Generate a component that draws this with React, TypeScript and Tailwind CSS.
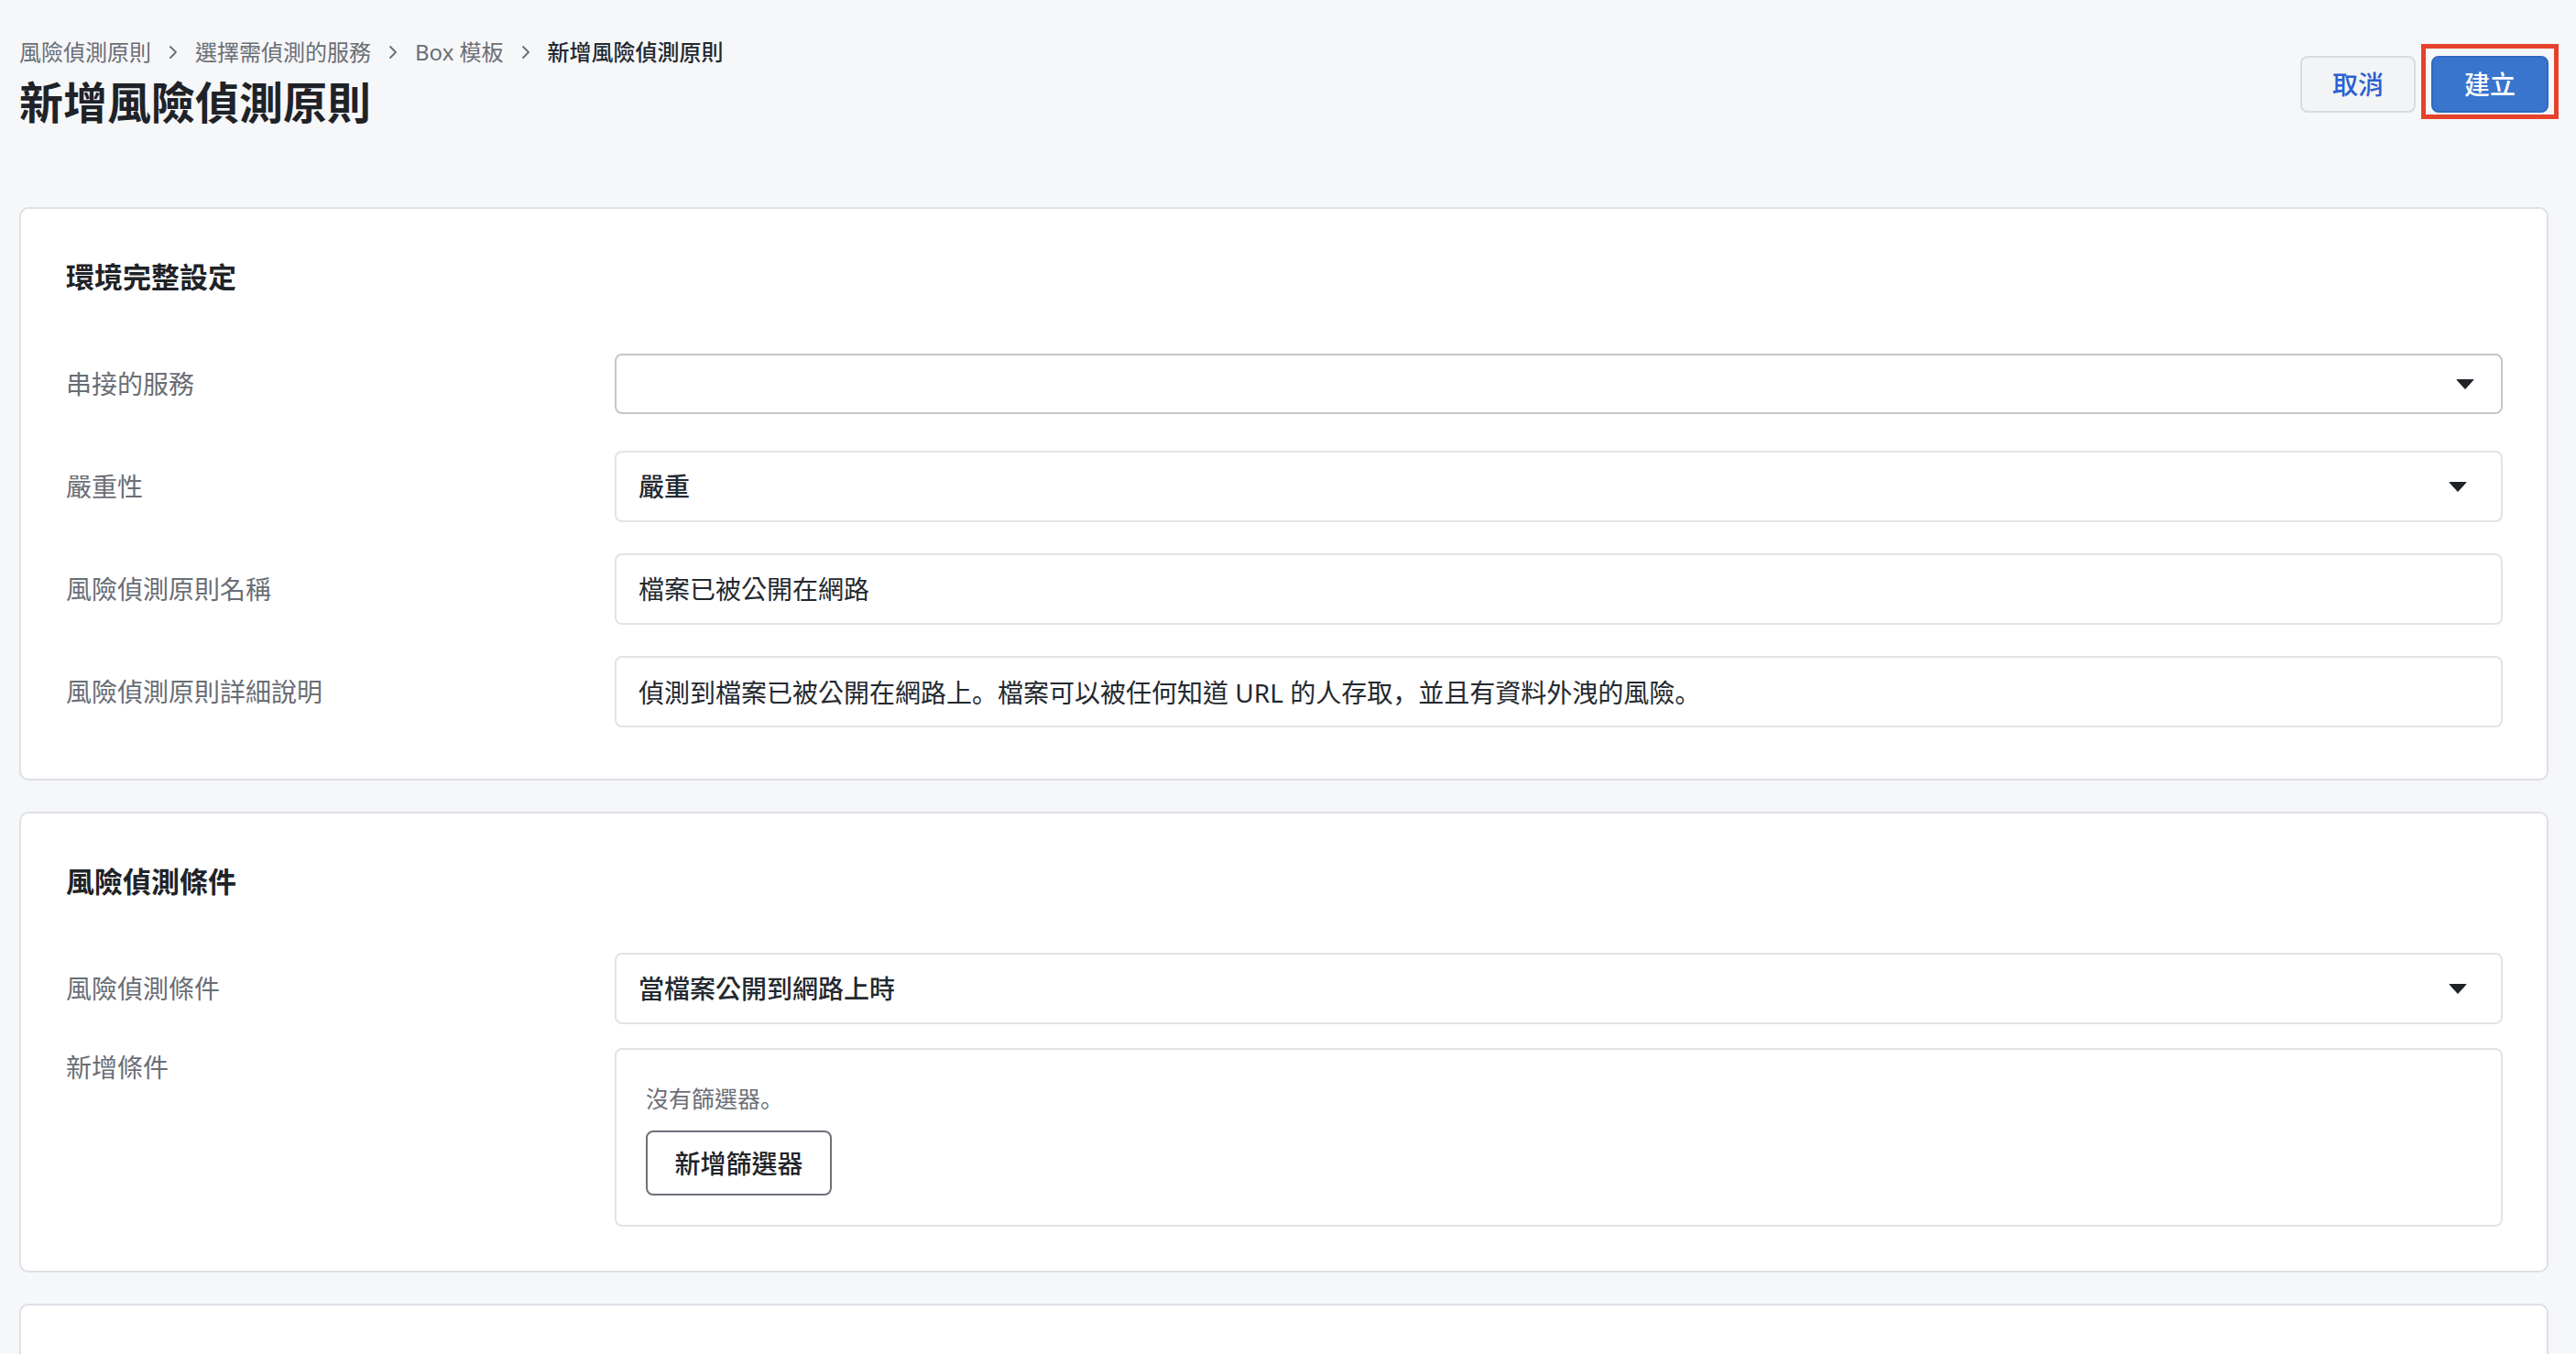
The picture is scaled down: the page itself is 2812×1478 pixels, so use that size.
import { ReactNode } from "react";

const FONT = "font-['Noto_Sans','Noto_Sans_CJK_TC',sans-serif]";

// punctuation sits bottom-left in the reference, like the SC forms
const Punct = ({ children }: { children: string }) => (
    <span className="font-['Noto_Sans_CJK_SC',sans-serif]">{children}</span>
);

const Triangle = ({ className }: { className?: string }) => (
    <svg width="20" height="11" viewBox="0 0 20 11" className={className}>
        <path d="M1 0.5 H19 L10 10.5 Z" fill="#1f2328" stroke="#1f2328" strokeWidth="1" strokeLinejoin="round" />
    </svg>
);

const Chevron = () => (
    <svg width="10" height="16" viewBox="0 0 10 16" className="mx-[19px]">
        <path d="M2 2 L8 8 L2 14" fill="none" stroke="#6a6e75" strokeWidth="1.8" strokeLinecap="round" strokeLinejoin="round" />
    </svg>
);

const Row = ({ label, children, top }: { label: string; children: ReactNode; top?: boolean }) => (
    <div className={`grid grid-cols-[599px_1fr] ${top ? "items-start" : "h-[112px] items-center"}`}>
        <div className={`text-[28px] text-[#6a6e75] ${top ? "leading-[43px]" : "leading-[42px]"}`}>{label}</div>
        {children}
    </div>
);

const SelectBox = ({ value, empty }: { value?: string; empty?: boolean }) => (
    <div
        className={
            empty
                ? "h-[66px] rounded-lg border-2 border-[#c5c6c8] bg-white flex items-center justify-between pl-[26px] pr-[29px]"
                : "h-[78px] rounded-lg border-2 border-[#e2e3e5] bg-white flex items-center justify-between pl-[24px] pr-[37px]"
        }
    >
        <span className="text-[28px] font-medium text-[#24292f] leading-[42px]">{value}</span>
        <Triangle />
    </div>
);

const TextBox = ({ children }: { children: ReactNode }) => (
    <div className="h-[78px] rounded-lg border-2 border-[#e2e3e5] bg-white flex items-center pl-[24px]">
        <span className="text-[28px] text-[#24292f] leading-[42px]">{children}</span>
    </div>
);

const Card = ({ title, children, className }: { title?: string; children?: ReactNode; className?: string }) => (
    <section className={`bg-white border-2 border-[#dde0e5] rounded-[10px] pl-[49px] pr-[48px] pt-[54px] ${className ?? ""}`}>
        {title && <h2 className="text-[31px] font-bold leading-[40px] text-[#1f2328]">{title}</h2>}
        {children}
    </section>
);

export default function App() {
    return (
        <div className={`${FONT} h-screen overflow-hidden bg-[#f6f7f9] pl-[21px] pr-[30px] pt-[41px]`}>
            <header className="flex justify-between items-start">
                <div>
                    <nav className="flex items-center h-[32px] text-[24px] leading-[32px] text-[#6a6e75]">
                        <span>風險偵測原則</span>
                        <Chevron />
                        <span>選擇需偵測的服務</span>
                        <Chevron />
                        <span>Box 模板</span>
                        <Chevron />
                        <span className="font-medium text-[#24292f]">新增風險偵測原則</span>
                    </nav>
                    <h1 className="mt-[11px] text-[48px] font-bold leading-[56px] text-[#1f2328]">新增風險偵測原則</h1>
                </div>
                <div className="mt-[20px] flex gap-[17px]">
                    <button className="w-[126px] h-[62px] rounded-lg border-2 border-[#dadbdd] bg-[#f3f4f5] text-[28px] font-medium text-[#2d5fd3]">
                        取消
                    </button>
                    <div className="relative">
                        <button className="w-[128px] h-[62px] rounded-lg border-2 border-[#2f68c2] bg-[#3a75cd] text-[28px] font-medium text-white">
                            建立
                        </button>
                        <div className="absolute -left-[11px] -right-[11px] -top-[13px] -bottom-[7px] border-[5px] border-[#e5422d] pointer-events-none" />
                    </div>
                </div>
            </header>

            <Card title="環境完整設定" className="mt-[86px] pb-[39px]">
                <div className="mt-[41px]">
                    <Row label="串接的服務">
                        <SelectBox empty />
                    </Row>
                    <Row label="嚴重性">
                        <SelectBox value="嚴重" />
                    </Row>
                    <Row label="風險偵測原則名稱">
                        <TextBox>檔案已被公開在網路</TextBox>
                    </Row>
                    <Row label="風險偵測原則詳細說明">
                        <TextBox>
                            偵測到檔案已被公開在網路上<Punct>。</Punct>檔案可以被任何知道 URL 的人存取<Punct>，</Punct>並且有資料外洩的風險<Punct>。</Punct>
                        </TextBox>
                    </Row>
                </div>
            </Card>

            <Card title="風險偵測條件" className="mt-[34px] pb-[48px]">
                <div className="mt-[41px]">
                    <Row label="風險偵測條件">
                        <SelectBox value="當檔案公開到網路上時" />
                    </Row>
                    <div className="mt-[9px]">
                        <Row label="新增條件" top>
                            <div className="rounded-lg border-2 border-[#e2e3e5] pl-[32px] pt-[34px] pb-[32px]">
                                <p className="text-[25px] leading-[36px] text-[#6a6e75]">
                                    沒有篩選器<Punct>。</Punct>
                                </p>
                                <button className="mt-[17px] w-[203px] h-[71px] rounded-lg border-2 border-[#6c717a] bg-white text-[28px] font-medium text-[#1f2328]">
                                    新增篩選器
                                </button>
                            </div>
                        </Row>
                    </div>
                </div>
            </Card>

            <Card className="mt-[34px] h-[400px]" />
        </div>
    );
}
